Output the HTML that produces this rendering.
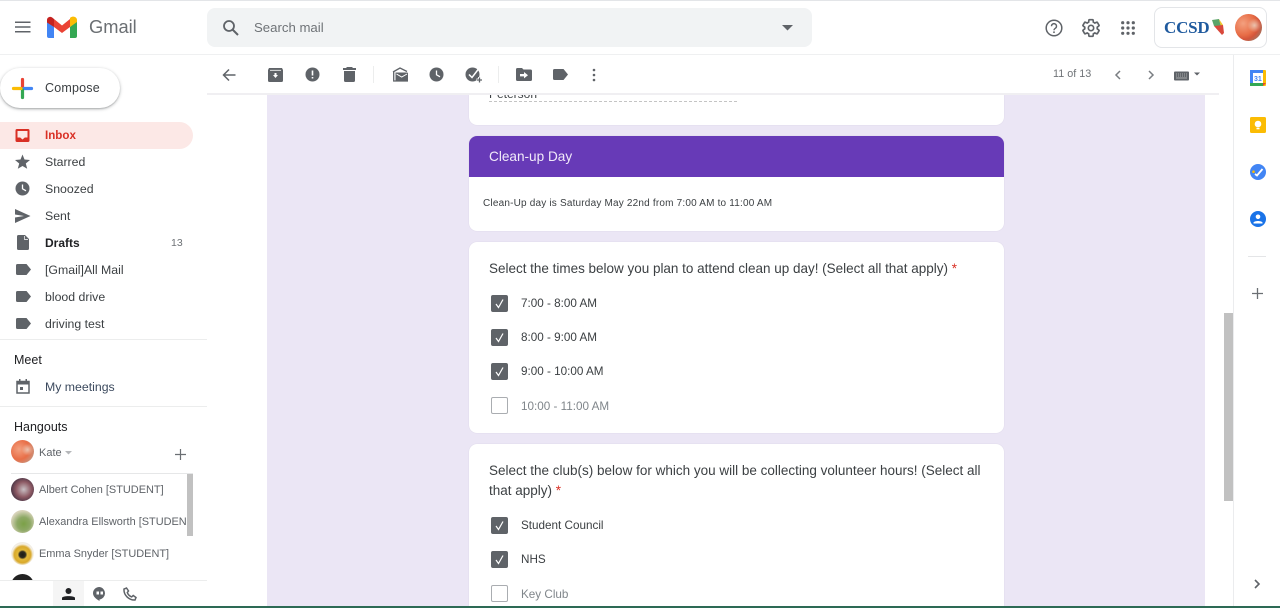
<!DOCTYPE html>
<html><head><meta charset="utf-8"><style>
html,body{margin:0;padding:0;background:#fff}
body{width:1280px;height:608px;overflow:hidden;position:relative;font-family:"Liberation Sans",Arial,sans-serif;color:#3c4043}
.a,.t{position:absolute}
.t{white-space:nowrap;line-height:16px}
svg{position:absolute;overflow:visible}
.nav{font-size:12.3px;left:45px;color:#3c4043}
.ic{fill:#5f6368}
.card{position:absolute;left:469px;width:535px;background:#fff;border-radius:8px;box-shadow:0 0 1px #cfc8dc}
.cb{position:absolute;left:491px;width:15px;height:15px;background:#5f6368;border:1px solid #5f6368;border-radius:2px}
.cb svg{left:0;top:0}
.un{background:#fff;border:1.5px solid #aaadb1;width:15px;height:15px}
.opt{font-size:11.7px;left:521px;color:#3c4043}
.q{font-size:13.48px;left:489px;color:#3c4043}
.p{font-size:10.95px;left:39px;color:#5f6368}
.av{position:absolute;border-radius:50%;width:23px;height:23px;left:11px}
</style></head><body>
<div class="a" style="left:0;top:0;width:1280px;height:1px;background:#e3e5e8"></div>
<div class="a" style="left:0;top:54px;width:1280px;height:1px;background:#eff0f1"></div>

<!-- header -->
<svg style="left:15px;top:21px" width="16" height="12"><path d="M0 1.200h15.500M0 6h15.500M0 10.800h15.500" stroke="#5f6368" stroke-width="1.500"/></svg>
<svg style="left:47px;top:16px" width="30" height="23" viewBox="0 0 30 23">
<path d="M0 4V20a2 2 0 0 0 2 2H7V11Z" fill="#4285f4"/>
<path d="M30 4V20a2 2 0 0 1-2 2H23V11Z" fill="#34a853"/>
<path d="M23 2V11l7-5V4C30 1 26-.5 23.500 1.500Z" fill="#fbbc04"/>
<path d="M7 11V3L15 9.500 23 3V11L15 17Z" fill="#ea4335"/>
<path d="M0 4V6.500L7 11V3L5.500 1.700C3.500 0 0 1 0 4Z" fill="#c5221f"/>
</svg>
<div class="t" style="left:89px;top:15px;font-size:18.3px;line-height:24px;color:#6b6f73">Gmail</div>
<div class="a" style="left:207px;top:8px;width:605px;height:39px;background:#f1f3f4;border-radius:8px"></div>
<svg style="left:222px;top:19px" width="18" height="18" viewBox="0 0 18 18"><circle cx="7" cy="7" r="5" fill="none" stroke="#5f6368" stroke-width="1.800"/><path d="M10.500 10.500L16 16" stroke="#5f6368" stroke-width="2"/></svg>
<div class="t" style="left:254px;top:20px;font-size:13.2px;color:#6f7377">Search mail</div>
<svg style="left:782px;top:25px" width="11" height="6"><path d="M0 0H11L5.500 5.500Z" fill="#5f6368"/></svg>
<svg style="left:1045px;top:19px" width="18" height="18" viewBox="0 0 18 18"><circle cx="9" cy="9" r="7.800" fill="none" stroke="#5f6368" stroke-width="1.500"/><path d="M6.500 7.200a2.500 2.500 0 1 1 3.800 2.100C9.400 9.900 9 10.300 9 11.200" fill="none" stroke="#5f6368" stroke-width="1.400"/><circle cx="9" cy="13.200" r=".9" fill="#5f6368"/></svg>
<svg style="left:1081px;top:18px" width="20" height="20" viewBox="0 0 24 24"><path d="M19.430 12.980c.04-.32.07-.64.07-.98s-.03-.66-.07-.98l2.110-1.650c.19-.15.24-.42.12-.64l-2-3.460c-.12-.22-.39-.3-.61-.22l-2.490 1c-.52-.4-1.080-.73-1.690-.98l-.38-2.650C14.460 2.180 14.250 2 14 2h-4c-.25 0-.46.18-.49.42l-.38 2.650c-.61.25-1.170.59-1.690.98l-2.490-1c-.23-.09-.49 0-.61.22l-2 3.460c-.13.22-.07.49.12.64l2.110 1.650c-.04.32-.07.65-.07.98s.03.66.07.98l-2.110 1.650c-.19.15-.24.42-.12.64l2 3.460c.12.22.39.3.61.22l2.490-1c.52.4 1.080.73 1.690.98l.38 2.650c.03.24.24.42.49.42h4c.25 0 .46-.18.49-.42l.38-2.650c.61-.25 1.170-.59 1.690-.98l2.490 1c.23.09.49 0 .61-.22l2-3.460c.12-.22.07-.49-.12-.64l-2.110-1.650z" fill="none" stroke="#5f6368" stroke-width="2"/><circle cx="12" cy="12" r="3.200" fill="none" stroke="#5f6368" stroke-width="2"/></svg>
<svg style="left:1121px;top:21px" width="14" height="14" class="ic"><circle cx="1.700" cy="1.700" r="1.600"/><circle cx="7" cy="1.700" r="1.600"/><circle cx="12.300" cy="1.700" r="1.600"/><circle cx="1.700" cy="7" r="1.600"/><circle cx="7" cy="7" r="1.600"/><circle cx="12.300" cy="7" r="1.600"/><circle cx="1.700" cy="12.300" r="1.600"/><circle cx="7" cy="12.300" r="1.600"/><circle cx="12.300" cy="12.300" r="1.600"/></svg>
<div class="a" style="left:1154px;top:7px;width:111px;height:39px;border:1px solid #e3e5e8;border-radius:8px;box-sizing:content-box"></div>
<div class="t" style="left:1164px;top:18px;font:bold 17px/20px 'Liberation Serif',serif;color:#1f5a9e;letter-spacing:-.2px">CCSD</div>
<svg style="left:1211px;top:19px" width="14" height="17"><path d="M1 1L8 0 10 7 3 7Z" fill="#5aa469"/><path d="M8 0L12 6 10 8Z" fill="#f0c62d"/><path d="M3 7L12 6 13 14 11 16Z" fill="#d9483b"/></svg>
<div class="a" style="left:1235px;top:14px;width:27px;height:27px;border-radius:50%;background:radial-gradient(circle at 72% 42%,rgba(235,215,200,.8) 0,transparent 28%),radial-gradient(circle at 30% 35%,#f3a07f 0,#e86e47 45%,#d4553a 62%,#9a7a68 85%,#4b3b35 100%)"></div>

<!-- main bg -->
<div class="a" style="left:267px;top:95px;width:938px;height:511px;background:#ebe6f5"></div>

<!-- card 0 -->
<div class="card" style="top:95px;height:30px;border-radius:0 0 8px 8px">
 <div class="a" style="left:20px;top:6px;width:248px;height:0;border-bottom:1px dashed #c4c4c4"></div>
</div>
<div class="a" style="left:489px;top:94px;width:60px;height:7px;overflow:hidden"><div class="t" style="left:0;top:-8px;font-size:12px;color:#3c4043">Peterson</div></div>

<!-- toolbar -->
<div class="a" style="left:207px;top:55px;width:1012px;height:38px;background:#fff"></div>
<div class="a" style="left:207px;top:93px;width:1012px;height:2px;background:#f0eff2"></div>
<svg style="left:222px;top:68px" width="14" height="14"><path d="M13.500 7H2M7 1.500L1.500 7 7 12.500" fill="none" stroke="#5f6368" stroke-width="1.500"/></svg>
<svg style="left:268px;top:68px" width="15" height="14" class="ic" viewBox="0 0 15 14"><path d="M1 0H14L15 2V12.500A1.500 1.500 0 0 1 13.500 14H1.500A1.500 1.500 0 0 1 0 12.500V2Z"/><path d="M2 2.300H13" stroke="#fff" stroke-width=".8"/><path d="M5 7H6.500V5H8.500V7H10L7.500 10Z" fill="#fff"/></svg>
<svg style="left:305px;top:67px" width="15" height="15" viewBox="0 0 15 15"><circle cx="7.500" cy="7.500" r="7" fill="#5f6368"/><path d="M6.700 3.500H8.300V8.500H6.700ZM6.700 10H8.300V11.500H6.700Z" fill="#fff"/></svg>
<svg style="left:343px;top:67px" width="13" height="15" class="ic"><path d="M4 0H9L10 1H13V3H0V1H3ZM1 4H12V13.500A1.500 1.500 0 0 1 10.500 15H2.500A1.500 1.500 0 0 1 1 13.500Z"/></svg>
<div class="a" style="left:373px;top:66px;width:1px;height:17px;background:#eceded"></div>
<svg style="left:392px;top:67px" width="16" height="15" viewBox="0 0 16 15"><path d="M1 5L8 1 15 4.500" fill="none" stroke="#5f6368" stroke-width="1.300"/><path d="M1.700 4.500V14H16" fill="none" stroke="#5f6368" stroke-width="1.300"/><path d="M3.500 5.500H15A1 1 0 0 1 16 6.500V14H3.500Z" fill="#5f6368"/><path d="M4.500 7L9.700 10 15 7" fill="none" stroke="#fff" stroke-width="1"/></svg>
<svg style="left:429px;top:67px" width="15" height="15" viewBox="0 0 15 15"><circle cx="7.500" cy="7.500" r="7" fill="#5f6368"/><path d="M7.500 3.500V7.800L11 9.800" fill="none" stroke="#fff" stroke-width="1.300"/></svg>
<svg style="left:465px;top:67px" width="18" height="17" viewBox="0 0 18 17"><circle cx="7.500" cy="7.500" r="7" fill="#5f6368"/><path d="M4 7.500L7 10.500 13.500 2" fill="none" stroke="#fff" stroke-width="1.500"/><path d="M14.500 10V16M11.500 13H17.500" stroke="#fff" stroke-width="3"/><path d="M14.500 10.500V15.500M12 13H17" stroke="#5f6368" stroke-width="1.300"/></svg>
<div class="a" style="left:498px;top:66px;width:1px;height:17px;background:#eceded"></div>
<svg style="left:516px;top:68px" width="16" height="13" viewBox="0 0 16 13"><path d="M0 1.500A1.500 1.500 0 0 1 1.500 0H6L7.500 1.500H14.500A1.500 1.500 0 0 1 16 3V11.500A1.500 1.500 0 0 1 14.500 13H1.500A1.500 1.500 0 0 1 0 11.500Z" fill="#5f6368"/><path d="M4 6H8V4L12 7.200 8 10.400V8.400H4Z" fill="#fff"/></svg>
<svg style="left:553px;top:69px" width="15" height="11" class="ic"><path d="M1.500 0H10.500L15 5.500 10.500 11H1.500A1.500 1.500 0 0 1 0 9.500V1.500A1.500 1.500 0 0 1 1.500 0Z"/></svg>
<svg style="left:592px;top:68px" width="4" height="14" class="ic"><circle cx="2" cy="2" r="1.300"/><circle cx="2" cy="7" r="1.300"/><circle cx="2" cy="12" r="1.300"/></svg>
<div class="t" style="left:1053px;top:66px;font-size:10.8px;color:#6f7377">11 of 13</div>
<svg style="left:1114px;top:70px" width="7" height="10"><path d="M6 1L2 5 6 9" fill="none" stroke="#7a7e82" stroke-width="1.500"/></svg>
<svg style="left:1148px;top:70px" width="7" height="10"><path d="M1 1L5 5 1 9" fill="none" stroke="#7a7e82" stroke-width="1.500"/></svg>
<svg style="left:1174px;top:71px" width="24" height="10"><rect width="15" height="9" y=".5" rx="1" fill="#5f6368"/><path d="M2 3H13M2 5H13" stroke="#a9abad" stroke-width="1" stroke-dasharray="1 1"/><path d="M2 7H13" stroke="#a9abad" stroke-width="1"/><path d="M20 1.500H26L23 4.500Z" fill="#5f6368"/></svg>

<!-- card 1 -->
<div class="card" style="top:136px;height:95px">
 <div class="a" style="left:0;top:0;width:535px;height:41px;background:#673ab7;border-radius:8px 8px 0 0"></div>
 <div class="t" style="left:20px;top:12px;font-size:13.6px;color:#f1eaf9;line-height:17px">Clean-up Day</div>
 <div class="t" style="left:14px;top:60px;font-size:10px;color:#3c4043;letter-spacing:.19px">Clean-Up day is Saturday May 22nd from 7:00 AM to 11:00 AM</div>
</div>

<!-- card 2 -->
<div class="card" style="top:242px;height:191px"></div>
<div class="t q" style="top:261px">Select the times below you plan to attend clean up day! (Select all that apply) <span style="color:#d93025">*</span></div>
<div class="cb" style="top:295px"><svg width="15" height="15"><path d="M4 8L6.500 11.500 11 3.500" fill="none" stroke="#fff" stroke-width="1.200"/></svg></div>
<div class="t opt" style="top:296px">7:00 - 8:00 AM</div>
<div class="cb" style="top:329px"><svg width="15" height="15"><path d="M4 8L6.500 11.500 11 3.500" fill="none" stroke="#fff" stroke-width="1.200"/></svg></div>
<div class="t opt" style="top:330px">8:00 - 9:00 AM</div>
<div class="cb" style="top:363px"><svg width="15" height="15"><path d="M4 8L6.500 11.500 11 3.500" fill="none" stroke="#fff" stroke-width="1.200"/></svg></div>
<div class="t opt" style="top:364px">9:00 - 10:00 AM</div>
<div class="cb un" style="top:397px"></div>
<div class="t opt" style="top:399px;color:#80868b">10:00 - 11:00 AM</div>

<!-- card 3 -->
<div class="card" style="top:444px;height:162px;border-radius:8px 8px 0 0"></div>
<div class="t q" style="top:463px;font-size:13.5px">Select the club(s) below for which you will be collecting volunteer hours! (Select all</div>
<div class="t q" style="top:483px;font-size:13.5px">that apply) <span style="color:#d93025">*</span></div>
<div class="cb" style="top:517px"><svg width="15" height="15"><path d="M4 8L6.500 11.500 11 3.500" fill="none" stroke="#fff" stroke-width="1.200"/></svg></div>
<div class="t opt" style="top:518px">Student Council</div>
<div class="cb" style="top:551px"><svg width="15" height="15"><path d="M4 8L6.500 11.500 11 3.500" fill="none" stroke="#fff" stroke-width="1.200"/></svg></div>
<div class="t opt" style="top:552px">NHS</div>
<div class="cb un" style="top:585px"></div>
<div class="t opt" style="top:587px;color:#80868b">Key Club</div>

<!-- scrollbar + side panel -->
<div class="a" style="left:1224px;top:313px;width:9px;height:188px;background:#c1c1c1"></div>
<div class="a" style="left:1233px;top:55px;width:1px;height:551px;background:#ebecee"></div>
<svg style="left:1250px;top:70px" width="16" height="16" viewBox="0 0 16 16"><rect width="16" height="16" rx="1" fill="#fbbc04"/><rect width="13" height="13" fill="#4285f4"/><rect x="0" y="13" width="13" height="3" fill="#34a853"/><rect x="3" y="3" width="10" height="10" fill="#fff"/><path d="M13 16L16 13H13Z" fill="#ea4335"/><text x="4" y="11" font-size="7" font-weight="bold" fill="#4285f4" font-family="Liberation Sans">31</text></svg>
<svg style="left:1250px;top:117px" width="16" height="16" viewBox="0 0 16 16"><rect width="16" height="16" rx="1.500" fill="#fbbc04"/><circle cx="8" cy="7" r="3.300" fill="#fff"/><rect x="6.500" y="10.800" width="3" height="1.500" fill="#fff"/></svg>
<svg style="left:1250px;top:164px" width="16" height="16" viewBox="0 0 16 16"><circle cx="8" cy="8" r="8" fill="#4285f4"/><path d="M5 10L7 11.500 12.500 5" fill="none" stroke="#fff" stroke-width="1.800"/><circle cx="3.500" cy="7.700" r="1.300" fill="#fbbc04"/></svg>
<svg style="left:1250px;top:211px" width="16" height="16" viewBox="0 0 16 16"><circle cx="8" cy="8" r="8" fill="#1a73e8"/><circle cx="8" cy="5.800" r="2.300" fill="#fff"/><path d="M3.500 11.500C4.500 9.500 11.500 9.500 12.500 11.500V12.500H3.500Z" fill="#fff"/></svg>
<div class="a" style="left:1248px;top:256px;width:18px;height:1px;background:#e4e5e7"></div>
<svg style="left:1252px;top:288px" width="11" height="11"><path d="M5.500 0V11M0 5.500H11" stroke="#6b6f73" stroke-width="1.300"/></svg>
<svg style="left:1254px;top:579px" width="7" height="10"><path d="M1 1L5 5 1 9" fill="none" stroke="#5f6368" stroke-width="1.600"/></svg>

<!-- compose -->
<div class="a" style="left:0;top:68px;width:120px;height:40px;background:#fff;border-radius:20px;box-shadow:0 1px 3px rgba(60,64,67,.4),0 1px 1px rgba(60,64,67,.15)"></div>
<svg style="left:12px;top:78px" width="21" height="21"><path d="M10.500 1.500V9" stroke="#ea4335" stroke-width="3.200" stroke-linecap="round"/><path d="M12 10.500H19.500" stroke="#4285f4" stroke-width="3.200" stroke-linecap="round"/><path d="M10.500 12V19.500" stroke="#34a853" stroke-width="3.200" stroke-linecap="round"/><path d="M1.500 10.500H9" stroke="#fbbc04" stroke-width="3.200" stroke-linecap="round"/></svg>
<div class="t" style="left:45px;top:80px;font-size:12.5px;color:#3c4043;letter-spacing:.2px">Compose</div>

<!-- nav -->
<div class="a" style="left:0;top:122px;width:193px;height:27px;background:#fce8e6;border-radius:0 14px 14px 0"></div>
<svg style="left:15px;top:128px" width="15" height="15" viewBox="0 0 15 15"><path d="M2 1H13A1.500 1.500 0 0 1 14.500 2.500V12.500A1.500 1.500 0 0 1 13 14H2A1.500 1.500 0 0 1 .5 12.500V2.500A1.500 1.500 0 0 1 2 1Z" fill="#d93025"/><path d="M2.500 3H12.500V9.500H9.800L7.500 11.500 5.200 9.500H2.500Z" fill="#fce8e6"/></svg>
<div class="t nav" style="top:128px;color:#d93025;font-weight:bold;font-size:11.6px">Inbox</div>
<svg style="left:15px;top:154px" width="15" height="15" class="ic"><path d="M7.500 .5L9.500 5.500 15 6 10.800 9.500 12.200 14.800 7.500 12 2.800 14.800 4.200 9.500 0 6 5.500 5.500Z"/></svg>
<div class="t nav" style="top:154px">Starred</div>
<svg style="left:15px;top:181px" width="15" height="15" viewBox="0 0 15 15"><circle cx="7.500" cy="7.500" r="7" fill="#5f6368"/><path d="M7.500 3.500V7.800L11 9.800" fill="none" stroke="#fff" stroke-width="1.300"/></svg>
<div class="t nav" style="top:181px">Snoozed</div>
<svg style="left:15px;top:209px" width="16" height="14" class="ic"><path d="M0 0L15.500 7 0 14V8.500L9 7 0 5.500Z"/></svg>
<div class="t nav" style="top:208px">Sent</div>
<svg style="left:17px;top:235px" width="12" height="15" class="ic"><path d="M1.500 0H8L12 4V13.500A1.500 1.500 0 0 1 10.500 15H1.500A1.500 1.500 0 0 1 0 13.500V1.500A1.500 1.500 0 0 1 1.500 0Z"/><path d="M7.500 1V4.500H11" fill="none" stroke="#fff" stroke-width=".7"/></svg>
<div class="t nav" style="top:235px;font-weight:bold;font-size:12px;color:#202124">Drafts</div>
<div class="t" style="left:171px;top:235px;font-size:10.5px;color:#6f7377">13</div>
<svg style="left:16px;top:264px" width="15" height="11" class="ic"><path d="M1.500 0H10.500L15 5.500 10.500 11H1.500A1.500 1.500 0 0 1 0 9.500V1.500A1.500 1.500 0 0 1 1.500 0Z"/></svg>
<div class="t nav" style="top:262px">[Gmail]All Mail</div>
<svg style="left:16px;top:291px" width="15" height="11" class="ic"><path d="M1.500 0H10.500L15 5.500 10.500 11H1.500A1.500 1.500 0 0 1 0 9.500V1.500A1.500 1.500 0 0 1 1.500 0Z"/></svg>
<div class="t nav" style="top:289px">blood drive</div>
<svg style="left:16px;top:318px" width="15" height="11" class="ic"><path d="M1.500 0H10.500L15 5.500 10.500 11H1.500A1.500 1.500 0 0 1 0 9.500V1.500A1.500 1.500 0 0 1 1.500 0Z"/></svg>
<div class="t nav" style="top:316px">driving test</div>
<div class="a" style="left:0;top:339px;width:207px;height:1px;background:#eceded"></div>

<div class="t" style="left:14px;top:352px;font-size:12.5px;color:#202124">Meet</div>
<svg style="left:16px;top:379px" width="14" height="15" viewBox="0 0 14 15"><path d="M1 2.500H13V14H1Z" fill="none" stroke="#5f6368" stroke-width="1.500"/><path d="M1 2H13V5.500H1ZM3 0H4.500V2H3ZM9.500 0H11V2H9.500Z" fill="#5f6368"/><rect x="4" y="8" width="3" height="3" fill="#5f6368"/></svg>
<div class="t nav" style="top:379px;color:#3c4a5e">My meetings</div>
<div class="a" style="left:0;top:406px;width:207px;height:1px;background:#eceded"></div>

<div class="t" style="left:14px;top:419px;font-size:12.5px;color:#202124">Hangouts</div>
<div class="av" style="top:440px;background:radial-gradient(circle at 72% 42%,rgba(235,215,200,.8) 0,transparent 28%),radial-gradient(circle at 35% 40%,#f3a07f 0,#e86e47 50%,#c9957f 80%,#7a6457 100%)"></div>
<div class="t p" style="top:445px;font-size:11px">Kate</div>
<svg style="left:65px;top:451px" width="7" height="4"><path d="M0 0H7L3.500 3.500Z" fill="#b5b7ba"/></svg>
<svg style="left:175px;top:449px" width="11" height="11"><path d="M5.500 0V11M0 5.500H11" stroke="#6b6f73" stroke-width="1.200"/></svg>
<div class="a" style="left:11px;top:473px;width:182px;height:1px;background:#e6e7e8"></div>
<div class="a" style="left:187px;top:474px;width:6px;height:62px;background:#c1c1c1"></div>
<div class="av" style="top:478px;background:radial-gradient(circle at 55% 50%,#c8c0c4 0,#8d5a64 45%,#33283a 85%)"></div>
<div class="t p" style="top:482px">Albert Cohen [STUDENT]</div>
<div class="av" style="top:510px;background:radial-gradient(circle at 55% 60%,#7ba147 0,#8da865 35%,#d9d4bb 70%,#b9b090 100%)"></div>
<div class="a" style="left:39px;top:513px;width:147px;height:18px;overflow:hidden"><div class="t p" style="left:0;top:1px">Alexandra Ellsworth [STUDENT]</div></div>
<div class="av" style="top:542px;background:radial-gradient(circle at 50% 55%,#1c1a14 0,#2c2a20 18%,#e2b93b 28%,#d9a92b 48%,#f5f0e5 62%,#ddd 100%)"></div>
<div class="t p" style="top:546px">Emma Snyder [STUDENT]</div>
<div class="a" style="left:11px;top:574px;width:23px;height:6px;overflow:hidden"><div class="av" style="left:0;top:0;background:#222"></div></div>
<div class="a" style="left:0;top:580px;width:207px;height:26px;background:#fff;border-top:1px solid #eceded;box-sizing:border-box"></div>
<div class="a" style="left:53px;top:581px;width:31px;height:25px;background:#f5f5f5"></div>
<svg style="left:62px;top:588px" width="13" height="12" fill="#202124"><circle cx="6.500" cy="3" r="3"/><path d="M0 12V10C0 7.500 13 7.500 13 10V12Z"/></svg>
<svg style="left:93px;top:587px" width="13" height="14" viewBox="0 0 13 14"><path d="M6.500 0A6.300 6.300 0 0 1 6.500 12.500V14C3 12 0 9.500 0 6.300A6.300 6.300 0 0 1 6.500 0Z" fill="#5f6368"/><path d="M3.500 4.500H6V7.500H3.500ZM7.500 4.500H10V7.500H7.500Z" fill="#fff"/></svg>
<svg style="left:123px;top:587px" width="14" height="14" viewBox="0 0 14 14"><path d="M3.500 1L5.500 4 4.300 5.500C5 7.500 6.700 9.200 8.700 9.900L10.200 8.500 13 10.500 12 13C6 13.500 .5 8 1 2Z" fill="none" stroke="#5f6368" stroke-width="1.500"/></svg>

<!-- bottom strip -->
<div class="a" style="left:0;top:606px;width:1280px;height:2px;background:#2d6a55"></div>
</body></html>
